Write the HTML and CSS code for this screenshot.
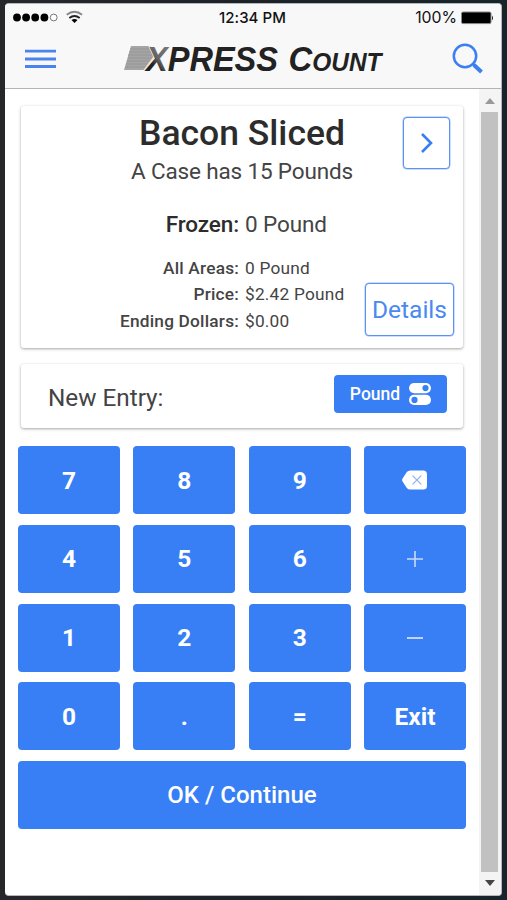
FILE: index.html
```html
<!DOCTYPE html>
<html lang="en">
<head>
<meta charset="utf-8">
<title>Express Count</title>
<link rel="stylesheet" href="styles.css">
</head>
<body>
<div class="phone">
  <header class="header">
    <div class="status">
      <div class="status-left">
        <svg width="75" height="16" viewBox="0 0 75 16"><g fill="#000"><circle cx="4" cy="7.500" r="3.900"/><circle cx="13.100" cy="7.500" r="3.900"/><circle cx="22.200" cy="7.500" r="3.900"/><circle cx="31.400" cy="7.500" r="3.900"/></g><circle cx="40.700" cy="7.500" r="3.400" fill="#fff" stroke="#777" stroke-width="1"/><g fill="none" stroke-width="1.900"><path d="M53.700 4.800q7.700-6 15.400 0" stroke="#888"/><path d="M56.300 7.900q5.200-4 10.400 0" stroke="#222"/></g><path d="M58.500 10.100q3-2.200 6 0l-3 2.900z" fill="#000"/></svg>
      </div>
      <div class="time">12:34 PM</div>
      <div class="status-right">100%<svg width="33" height="14" viewBox="0 0 33 14"><rect x=".5" y="1" width="29.500" height="11.600" rx="1.500" fill="#000" stroke="#888"/><path d="M31 4.500q2 2.500 0 5z" fill="#222"/></svg></div>
    </div>
    <div class="toolbar">
      <svg class="menu" width="31" height="20" viewBox="0 0 31 20"><path d="M0 2.200h31M0 10h31M0 17.500h31" stroke="#4a83ee" stroke-width="2.800"/></svg>
      <svg class="logo" width="262" height="36" viewBox="0 0 262 36">
        <defs><linearGradient id="fade" gradientUnits="userSpaceOnUse" x1="24" y1="30" x2="47" y2="8"><stop offset=".25" stop-color="#222"/><stop offset=".5" stop-color="#666"/><stop offset="1" stop-color="#777"/></linearGradient></defs>
        <path d="M8 6H27L31 17 22 30H1z" fill="#a5a5a5"/>
        <path d="M7 9H27M6 12H28M5 15H30M5 18H30M4 21H28M3 24H26M2 27H24" stroke="#959595" stroke-width="1"/>
        <path d="M26 6l5 11L21 30.500" stroke="#e8e8e8" stroke-width="1.500" fill="none"/>
        <g class="logo-text">
          <text x="23" y="30.500" font-size="35" textLength="132" lengthAdjust="spacingAndGlyphs"><tspan fill="url(#fade)">X</tspan>PRESS</text>
          <text x="165.500" y="30.500" font-size="35" textLength="93" lengthAdjust="spacingAndGlyphs">C<tspan font-size="26">OUNT</tspan></text>
        </g>
      </svg>
      <svg class="search" width="32" height="32" viewBox="0 0 32 32" fill="none" stroke="#3c7ff0"><circle cx="13" cy="13" r="11.200" stroke-width="2.500"/><path d="M20.500 20.500L22.500 22.500" stroke-width="2.500"/><path d="M22 22L29.500 29" stroke-width="4"/></svg>
    </div>
  </header>
  <div class="body">
    <main class="content">
      <section class="card item">
        <div class="headline">
          <h1>Bacon Sliced</h1>
          <p class="case">A Case has 15 Pounds</p>
        </div>
        <div class="row frozen"><b>Frozen:</b><span>0 Pound</span></div>
        <div class="rows">
          <div class="row"><b>All Areas:</b><span>0 Pound</span></div>
          <div class="row"><b>Price:</b><span>$2.42 Pound</span></div>
          <div class="row"><b>Ending Dollars:</b><span>$0.00</span></div>
        </div>
        <button class="outline next"><svg width="14" height="22" viewBox="0 0 14 22"><path d="M2 2l9 9-9 9" fill="none" stroke="#387ef5" stroke-width="2.600"/></svg></button>
        <button class="outline details">Details</button>
      </section>
      <section class="card entry">
        <span class="entry-label">New Entry:</span>
        <button class="unit">Pound<svg width="22" height="22" viewBox="0 0 22 22"><rect width="22" height="10.200" rx="5.100" fill="#fff"/><rect y="11.800" width="22" height="10.200" rx="5.100" fill="#fff"/><g fill="#387ef5"><circle cx="16.500" cy="5.100" r="3.100"/><circle cx="5.500" cy="16.900" r="3.100"/></g></svg></button>
      </section>
      <div class="keys">
        <button>7</button><button>8</button><button>9</button>
        <button><svg class="back" width="25" height="20" viewBox="0 0 26 20"><path d="M8.500 0H22q4 0 4 4v12q0 4-4 4H8.500Q6.500 20 5 18.200L.6 11.500q-1-1.500 0-3L5 1.800Q6.500 0 8.500 0z" fill="#fff"/><path d="M11 5.500l9 9M20 5.500l-9 9" stroke="#8fb0f2" stroke-width="1.300"/></svg></button>
        <button>4</button><button>5</button><button>6</button>
        <button><svg width="16" height="16" viewBox="0 0 16 16"><path d="M0 8h16M8 0v16" stroke="#c8dafc" stroke-width="1.600"/></svg></button>
        <button>1</button><button>2</button><button>3</button>
        <button><svg width="16" height="16" viewBox="0 0 16 16"><path d="M0 8h16" stroke="#c8dafc" stroke-width="1.900"/></svg></button>
        <button>0</button><button>.</button><button>=</button><button>Exit</button>
        <button class="ok">OK / Continue</button>
      </div>
    </main>
    <div class="scrollbar">
      <svg width="10" height="6" viewBox="0 0 10 6"><path d="M0 6L5 0l5 6z" fill="#999"/></svg>
      <div class="thumb"></div>
      <svg width="10" height="6" viewBox="0 0 10 6"><path d="M0 0h10L5 6z" fill="#444"/></svg>
    </div>
  </div>
</div>
</body>
</html>
```

FILE: styles.css
```css
* { box-sizing: border-box; }
body {
  margin: 0;
  height: 900px;
  padding: 3px 5px 4px;
  overflow: hidden;
  background: linear-gradient(90deg, #25272b, #1d2229 50%, #18242b);
  font-family: Roboto, "Liberation Sans", sans-serif;
  color: #444;
}
h1, p { margin: 0; }
svg { display: block; flex: none; }
button {
  font: inherit;
  padding: 0;
  border: 0;
  border-radius: 4px;
  background: #387ef5;
  color: #fff;
  display: flex;
  align-items: center;
  justify-content: center;
}
.phone {
  width: 497px;
  height: 893px;
  border-radius: 4px;
  overflow: hidden;
  background: #fff;
  border: 1px solid #b5b7b9;
  border-left-width: 0;
  display: flex;
  flex-direction: column;
}
.header {
  height: 85px;
  flex: none;
  background: #f8f8f8;
  border-bottom: 1px solid #b4b4b4;
}
.status {
  height: 27px;
  padding: 0 7px 0 8px;
  display: grid;
  grid-template-columns: 1fr auto 1fr;
  align-items: center;
  color: #111;
}
.time { font: 500 15px Inter, sans-serif; margin-left: -2px; margin-top: -1px; letter-spacing: 0.05px; }
.status-right {
  display: flex;
  justify-content: flex-end;
  align-items: center;
  gap: 4px;
  font: 400 15.8px Inter, sans-serif;
}
.toolbar { display: flex; align-items: center; padding: 0 17px 0 20px; height: 56px; }
.logo { margin-left: 67px; margin-top: -2px; }
.logo-text { font-family: "Liberation Sans", sans-serif; font-weight: bold; font-style: italic; fill: #222; }
.search { margin-left: auto; }
.body { flex: 1; display: flex; min-height: 0; }
.content { flex: 1; padding: 17px 13px 0; }
.card {
  margin: 0 3px;
  border-radius: 3px;
  background: #fff;
  box-shadow: 0 1px 3px rgba(0, 0, 0, .36);
}
.item { position: relative; height: 242px; padding-top: 6px; }
.headline { text-align: center; }
h1 { font-size: 35.5px; line-height: 42px; font-weight: 500; color: #2c2c2c; }
.case { font-size: 22.5px; line-height: 34px; letter-spacing: -0.15px; }
.row {
  display: grid;
  grid-template-columns: 218px 1fr;
  column-gap: 6px;
  font-size: 17.3px;
  line-height: 26.7px;
  letter-spacing: 0.2px;
}
.row b { text-align: right; font-weight: 500; white-space: nowrap; }
.frozen { margin-top: 19px; font-size: 22.5px; line-height: 34px; letter-spacing: -0.1px; }
.frozen b { color: #2c2c2c; }
.rows { margin-top: 13.7px; }
.outline {
  position: absolute;
  background: #fff;
  border: 1.500px solid #5a93f5;
  color: #4a88f2;
  box-shadow: 0 0 0 .5px #9bbdf8;
}
.next { right: 13px; top: 11px; width: 47px; height: 52px; }
.details { right: 9px; bottom: 12px; width: 89px; height: 53px; font-size: 24.5px; }
.entry {
  margin-top: 16px;
  height: 64px;
  padding: 0 16px 0 27px;
  display: flex;
  align-items: center;
  justify-content: space-between;
}
.entry-label { font-size: 24.3px; padding-top: 3px; }
.unit { width: 113px; height: 38px; gap: 9px; font-size: 17.5px; font-weight: 500; margin-top: -4px; }
.keys {
  margin-top: 18.4px;
  display: grid;
  grid-template-columns: repeat(4, 102px);
  grid-auto-rows: 68px;
  justify-content: space-between;
  row-gap: 10.600px;
}
.keys button { font-size: 24.5px; font-weight: 700; }
.keys .ok { grid-column: 1 / -1; font-weight: 500; font-size: 24px; }
.scrollbar {
  width: 22px;
  background: #f4f4f4;
  padding: 9px 3px 9px 2px;
  display: flex;
  flex-direction: column;
  align-items: center;
  gap: 8px;
}
.thumb { flex: 1; width: 17px; background: #c1c1c1; }
```
